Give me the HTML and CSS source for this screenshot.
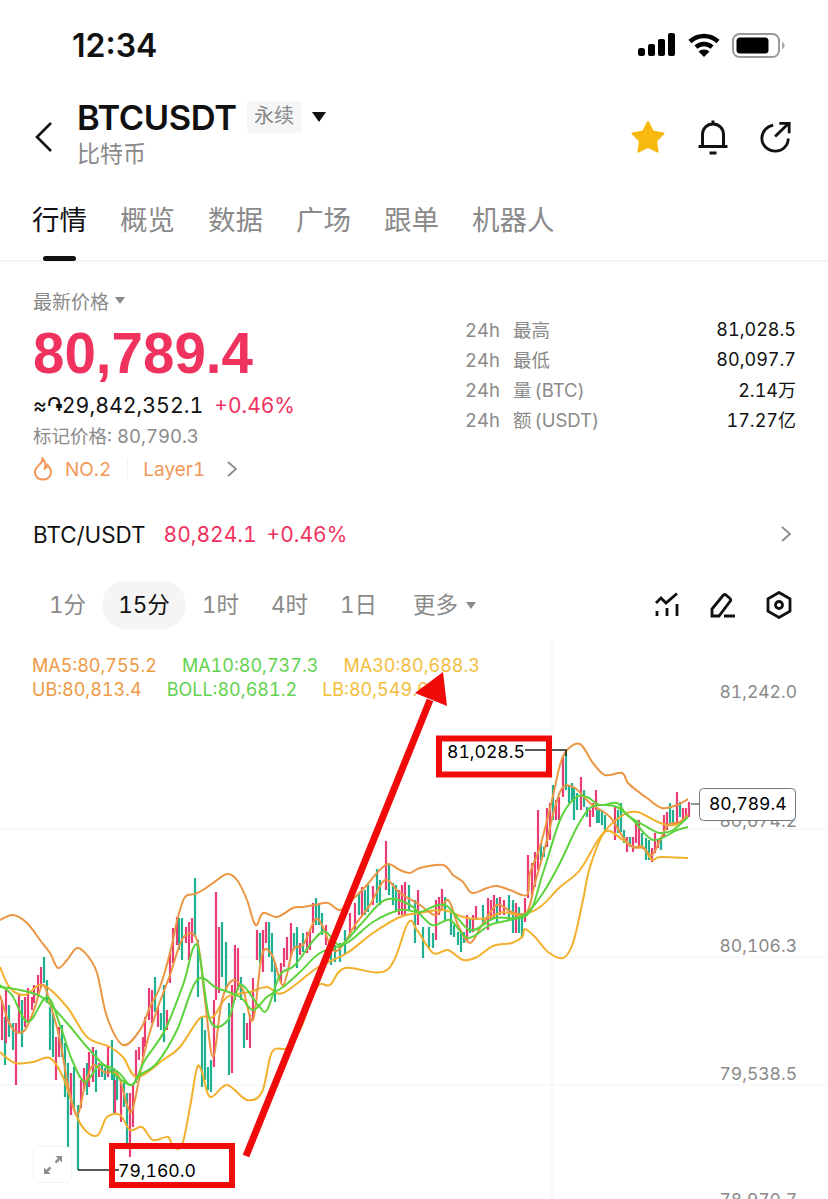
FILE: index.html
```html
<!DOCTYPE html>
<html lang="zh-CN">
<head>
    <meta charset="UTF-8">
    <meta name="viewport" content="width=device-width, initial-scale=1.0">
    <title>BTCUSDT 永续</title>
    <link rel="stylesheet" href="styles.css">
</head>
<body>
    <div class="screen">
        <div class="status-bar">
            <span class="clock">12:34</span>
            <div class="status-icons">
                <svg width="38" height="24" viewBox="0 0 38 24">
                    <rect x="0" y="15" width="7" height="8" rx="2.5"/>
                    <rect x="10" y="11" width="7" height="12" rx="2"/>
                    <rect x="20" y="6" width="7" height="17" rx="2"/>
                    <rect x="30" y="0" width="7" height="23" rx="2"/>
                </svg>
                <svg width="32" height="25" viewBox="0 0 32 25">
                    <path d="M2 8.5C10 1 22 1 30 8.5" class="wifi-arc"/>
                    <path d="M8 14.2C12.5 10 19.5 10 24 14.2" class="wifi-arc"/>
                    <path d="M16 24L10.5 18.6C13.5 15.8 18.5 15.8 21.5 18.6Z"/>
                </svg>
                <svg width="53" height="25" viewBox="0 0 53 25">
                    <rect x="1" y="1" width="46" height="23" rx="6.5" class="battery-shell"/>
                    <rect x="4.5" y="4.5" width="32" height="16" rx="3.5"/>
                    <path d="M50 9C52 9.6 52.6 11 52.6 12.5S52 15.4 50 16Z" class="battery-cap"/>
                </svg>
            </div>
        </div>

        <header class="pair-head">
            <svg class="back" width="20" height="32" viewBox="0 0 20 32">
                <path d="M17 2L3 16L17 30"/>
            </svg>
            <div class="pair-name">
                <div class="pair-title">
                    <h1>BTCUSDT</h1>
                    <span class="pair-type">永续</span>
                    <i class="caret-big"></i>
                </div>
                <div class="pair-sub">比特币</div>
            </div>
            <div class="pair-actions">
                <svg width="36" height="34" viewBox="0 0 36 34">
                    <path d="M18 2L23 11.6L33.6 13.4L26 21L27.6 31.6L18 26.8L8.4 31.6L10 21L2.4 13.4L13 11.6Z" class="star"/>
                </svg>
                <svg width="32" height="36" viewBox="0 0 32 36">
                    <path d="M16 1.500V5M5.500 27V15.500C5.500 9.500 10 5 16 5S26.500 9.500 26.500 15.500V27M1.500 27.500H30.500M12.500 34H19.500" class="line-icon"/>
                </svg>
                <svg width="32" height="32" viewBox="0 0 34 34">
                    <path d="M14 4.500C7 5.800 2 11.500 2 18.300C2 26 8.500 32 16.300 32C24 32 30 26 30 18.500M16 16.500L30 3M20.500 2.500H31V13" class="line-icon"/>
                </svg>
            </div>
        </header>

        <nav class="tabs">
            <a class="tab active">行情</a>
            <a class="tab">概览</a>
            <a class="tab">数据</a>
            <a class="tab">广场</a>
            <a class="tab">跟单</a>
            <a class="tab">机器人</a>
        </nav>

        <section class="quote">
            <div class="quote-main">
                <div class="quote-label">最新价格 <i class="caret-small"></i></div>
                <div class="last-price">80,789.4</div>
                <div class="fiat-row">
                    <span class="fiat">≈֏29,842,352.1</span>
                    <span class="up">+0.46%</span>
                </div>
                <div class="mark-price">标记价格: 80,790.3</div>
                <div class="rank-row">
                    <svg width="20" height="24" viewBox="0 0 20 24">
                        <path d="M9.500 1.500C10 6 5.500 7.500 3 11.500C0.500 16 3 22.500 10 22.500C17 22.500 19 16.500 17.500 12.500C16.500 10 15.500 9.500 14.500 8C14 10.500 13 11 11.800 11.500C12.800 8 12 4 9.500 1.500Z"/>
                    </svg>
                    <span class="rank">NO.2</span>
                    <span class="rank-sep"></span>
                    <span class="rank">Layer1</span>
                    <svg class="chev" width="12" height="18" viewBox="0 0 12 18">
                        <path d="M2 2L10 9L2 16"/>
                    </svg>
                </div>
            </div>
            <div class="stats">
                <div class="stat"><span class="stat-key">24h<b>最高</b></span><span class="stat-val">81,028.5</span></div>
                <div class="stat"><span class="stat-key">24h<b>最低</b></span><span class="stat-val">80,097.7</span></div>
                <div class="stat"><span class="stat-key">24h<b>量 (BTC)</b></span><span class="stat-val">2.14万</span></div>
                <div class="stat"><span class="stat-key">24h<b>额 (USDT)</b></span><span class="stat-val">17.27亿</span></div>
            </div>
        </section>

        <div class="spot-row">
            <span class="spot-name">BTC/USDT</span>
            <span class="spot-price">80,824.1</span>
            <span class="spot-price">+0.46%</span>
            <svg class="chev" width="12" height="18" viewBox="0 0 12 18">
                <path d="M2 2L10 9L2 16"/>
            </svg>
        </div>

        <div class="period-bar">
            <a class="period">1分</a>
            <a class="period active">15分</a>
            <a class="period">1时</a>
            <a class="period">4时</a>
            <a class="period">1日</a>
            <a class="period more">更多 <i class="caret-small"></i></a>
            <div class="period-tools">
                <svg width="26" height="26" viewBox="0 0 26 26">
                    <path d="M2 11L7 6L12 11L23 1.500M3 19V24M13 16V24M23 12V24" class="line-icon thin"/>
                </svg>
                <svg width="26" height="26" viewBox="0 0 26 26">
                    <path d="M2 24V17L13 3.500C14 2.300 15 2.300 16 3L20 6.500C21 7.500 21 8.500 20 9.500L9 24ZM14 24H25" class="line-icon thin"/>
                </svg>
                <svg width="26" height="28" viewBox="0 0 26 28">
                    <path d="M13 1.500L24 7.800V20.200L13 26.500L2 20.200V7.800Z" class="line-icon thin"/>
                    <circle cx="13" cy="14" r="3.500" class="line-icon thin"/>
                </svg>
            </div>
        </div>

        <div class="chart">
            <div class="legend">
                <div class="legend-row">
                    <span class="c-orange">MA5:80,755.2</span>
                    <span class="c-green">MA10:80,737.3</span>
                    <span class="c-yellow">MA30:80,688.3</span>
                </div>
                <div class="legend-row">
                    <span class="c-orange">UB:80,813.4</span>
                    <span class="c-green">BOLL:80,681.2</span>
                    <span class="c-yellow">LB:80,549.6</span>
                </div>
            </div>

            <!-- viewBox starts at 640 so y values read as page rows -->
            <svg class="plot" width="828" height="559" viewBox="0 640 828 559">
                <path class="grid" d="M0 829H828M0 957H828M0 1085H828M552 640V1199"/>

                <text class="axis" x="797" y="698">81,242.0</text>
                <text class="axis" x="797" y="827">80,674.2</text>
                <text class="axis" x="797" y="952">80,106.3</text>
                <text class="axis" x="797" y="1080">79,538.5</text>
                <text class="axis" x="797" y="1206">78,970.7</text>

                <path class="candle-down" d="M5 1017V1065M9 1005V1037M13 1023V1050M22 1000V1047M44 957V983M47 980V1003M50 1007V1050M53 1013V1057M62 1025V1057M65 1043V1097M68 1063V1148M74 1067V1110M78 1105V1170M87 1063V1095M96 1050V1092M102 1063V1077M105 1068V1080M112 1040V1080M114 1068V1113M117 1073V1100M124 1083V1107M127 1093V1143M155 977V1012M161 1013V1030M164 985V1042M179 918V950M182 918V960M195 878V937M198 940V997M202 1017V1087M205 1030V1080M208 1067V1090M211 1060V1092M222 922V977M226 942V990M229 1003V1075M241 977V1000M244 1013V1048M260 933V963M269 922V957M272 933V972M275 962V1002M294 933V950M297 927V968M303 933V952M316 898V925M319 905V925M322 913V935M331 950V965M335 945V962M340 943V962M345 930V955M359 892V915M365 890V915M368 883V912M377 869V903M380 880V905M389 865V895M393 883V905M396 885V910M409 885V910M415 900V943M423 927V958M429 927V948M433 933V948M445 897V920M451 913V935M454 925V937M458 932V945M461 933V952M464 932V943M470 918V933M483 905V925M497 898V922M509 895V920M513 900V933M519 907V933M522 913V938M541 843V860M544 847V857M553 785V820M566 752V790M569 785V803M572 783V800M574 787V820M577 793V810M584 790V807M587 807V817M597 810V823M599 810V823M602 810V825M605 815V830M618 810V833M621 803V832M624 830V843M630 837V847M642 833V848M646 838V860M649 840V860M661 837V850M670 803V823M673 810V825M680 802V817"/>
                <path class="candle-up" d="M2 1000V1040M6 990V1043M16 1023V1085M19 993V1032M25 997V1027M28 988V1022M32 997V1010M34 985V1003M38 975V997M41 967V988M56 1037V1080M59 1027V1057M71 1073V1115M81 1080V1108M84 1068V1090M89 1052V1087M93 1047V1082M99 1063V1077M108 1047V1077M115 1080V1113M121 1080V1122M130 1093V1157M133 1083V1127M136 1050V1083M139 1047V1060M143 1037V1057M145 1017V1047M149 988V1020M152 990V1023M158 1007V1027M167 1010V1030M170 952V983M173 928V963M177 917V945M186 927V943M189 922V960M192 918V943M214 1000V1067M216 892V1000M219 927V993M232 985V1073M235 945V1000M238 948V990M247 1023V1040M250 1015V1048M253 978V1020M257 930V960M263 930V972M266 922V943M281 963V983M284 948V967M287 937V960M291 923V957M300 943V955M307 932V953M310 930V950M313 903V933M326 925V945M350 913V937M355 903V930M362 887V915M373 886V905M386 841V890M399 890V915M402 885V915M405 882V915M418 890V925M436 900V940M439 897V915M442 889V910M467 915V942M473 915V932M476 906V920M488 898V930M491 900V920M494 895V918M500 897V915M504 900V915M516 903V933M525 898V922M528 855V898M532 863V897M535 852V887M538 810V870M547 808V847M550 803V840M556 800V820M559 797V820M563 757V797M581 777V810M590 810V827M593 803V817M596 790V810M615 807V840M627 837V852M633 837V852M636 820V843M639 820V848M652 848V862M655 833V853M658 840V848M664 815V837M667 812V830M677 792V825M683 808V822M686 808V817M689 802V817"/>

                <!-- upper band -->
                <path class="line-ub" data-points="0,920 13,915 27,923 40,940 50,953 58,968 67,960 77,948 87,955 97,973 107,1017 123,1045 140,1030 150,1007 160,987 170,953 178,917 185,897 195,894 203,890 213,883 227,874 237,880 247,900 253,920 257,925 263,913 277,917 293,908 303,907 315,905 328,903 340,910 352,900 366,886 377,873 388,864 400,870 410,873 420,868 443,865 453,875 463,882 472,893 487,888 497,886 510,890 527,895 530,873 540,847 552,800 560,765 567,750 580,744 593,763 605,775 622,773 628,783 640,793 647,798 662,808 677,805 688,799"/>
                <!-- lower band -->
                <path class="line-lb" data-points="0,1052 15,1063 33,1062 50,1058 63,1077 77,1117 87,1132 98,1135 107,1117 120,1115 130,1130 142,1127 153,1140 168,1137 173,1147 182,1145 190,1107 197,1068 202,1072 210,1097 227,1085 247,1100 262,1092 272,1052 287,1048 300,1030 317,987 330,985 345,968 387,970 408,923 417,930 433,953 448,950 463,960 477,957 493,946 512,943 522,937 525,929 535,937 548,952 563,958 573,943 583,900 590,867 605,832 623,840 633,847 643,847 652,860 660,857 688,858"/>
                <!-- ma30 -->
                <path class="line-lb" data-points="0,967 10,988 25,995 43,985 67,1007 87,1037 110,1047 123,1057 137,1077 163,1060 180,1047 200,1018 213,1017 227,997 250,992 267,987 283,993 317,968 347,953 373,933 400,917 420,913 443,910 467,918 487,918 503,912 520,915 540,907 560,887 580,870 600,837 620,817 637,812 660,823 675,825 688,815"/>
                <!-- ma5 -->
                <path class="line-ub" data-points="0,995 8,1020 16,1032 25,1030 34,1010 43,985 52,1010 60,1040 68,1085 77,1115 85,1085 93,1065 104,1072 118,1075 127,1105 133,1108 145,1050 157,1010 170,975 183,938 197,940 205,1000 213,1057 222,1000 233,980 243,990 253,1020 262,955 272,955 283,985 293,950 303,945 315,920 322,925 333,950 343,945 355,925 370,905 385,880 400,893 420,905 436,915 448,900 458,925 470,943 482,925 497,905 512,912 527,912 535,883 547,840 555,807 563,787 575,788 590,803 610,817 623,837 633,847 643,848 652,855 660,840 668,825 680,822 688,815"/>
                <!-- ma10 -->
                <path class="line-ma" data-points="0,987 20,990 43,998 67,1023 87,1047 107,1068 130,1085 140,1075 157,1063 177,1030 197,980 217,988 240,997 253,1010 267,997 283,987 300,972 320,953 347,943 373,922 400,910 420,912 445,905 470,930 495,918 527,915 543,873 560,820 575,798 587,797 600,805 617,803 627,815 647,827 660,833 673,830 688,817"/>
                <!-- boll -->
                <path class="line-ma" data-points="0,985 12,995 28,1022 47,997 60,1025 72,1060 85,1082 100,1065 118,1072 132,1085 145,1060 165,1030 183,985 197,945 210,1020 228,1020 240,985 258,1005 267,1010 280,975 295,965 322,932 340,945 360,925 385,900 410,905 432,925 450,920 468,938 490,925 510,920 527,913 543,893 560,863 577,827 590,808 603,805 617,807 633,820 653,840 677,830 688,827"/>

                <path class="marker-line" d="M525 750H566V756M78 1170H119"/>
                <text class="marker" x="447" y="758">81,028.5</text>
                <text class="marker" x="118" y="1177">79,160.0</text>

                <rect class="red-box" x="439" y="738.500" width="110" height="36"/>
                <rect class="red-box" x="112" y="1146" width="120" height="39"/>
                <path class="red-arrow-shaft" d="M246 1156L430 700"/>
                <polygon class="red-arrow-head" points="443,672 447,706 415,693"/>

                <path class="tag-tick" d="M691 804H699"/>
                <rect class="price-tag" x="699.500" y="788.500" width="96" height="32" rx="4"/>
                <text class="tag-text" x="709" y="810">80,789.4</text>
            </svg>

            <button class="expand">
                <svg width="20" height="20" viewBox="0 0 20 20">
                    <path d="M1 19V12.500L7.500 19ZM19 1V7.500L12.500 1Z"/>
                    <path d="M4 16L16 4" class="expand-bar"/>
                </svg>
            </button>
        </div>
    </div>
    <script src="chart.js"></script>
</body>
</html>
```

FILE: styles.css
```css
* {
    box-sizing: border-box;
}
html, body {
    margin: 0;
    background-color: #fff;
}
body {
    font-family: Inter, "Noto Sans CJK SC", sans-serif;
    font-variant-numeric: tabular-nums;
    color: #111;
}
.screen {
    width: 828px;
    height: 1199px;
    overflow: hidden;
}

/* status bar */
.status-bar {
    height: 90px;
    display: flex;
    align-items: center;
    justify-content: space-between;
    padding: 0 43px 0 72px;
}
.clock {
    font-size: 32px;
    font-weight: 600;
    font-variant-numeric: normal;
}
.status-icons {
    display: flex;
    align-items: center;
    gap: 12px;
}
.status-icons svg {
    fill: #000;
}
.status-icons .wifi-arc {
    fill: none;
    stroke: #000;
    stroke-width: 4.5;
}
.status-icons .battery-shell {
    fill: none;
    stroke: #999;
    stroke-width: 2;
}
.status-icons .battery-cap {
    fill: #aaa;
}

/* pair header */
.pair-head {
    height: 94px;
    display: flex;
    align-items: center;
    padding: 0 36px 0 34px;
}
.back {
    margin-right: 23px;
}
.back path {
    fill: none;
    stroke: #111;
    stroke-width: 2.6;
}
.pair-name {
    flex: 1;
    margin-top: -10px;
}
.pair-title {
    display: flex;
    align-items: center;
    height: 44px;
}
.pair-title h1 {
    margin: 0;
    font-size: 34.500px;
    font-weight: 600;
    letter-spacing: -0.4px;
}
.pair-type {
    margin-left: 10px;
    width: 55px;
    height: 32px;
    line-height: 30px;
    text-align: center;
    font-size: 20px;
    color: #888;
    background-color: #f6f6f6;
    border-radius: 3px;
}
.caret-big {
    margin-left: 10px;
    border-left: 7px solid transparent;
    border-right: 7px solid transparent;
    border-top: 10px solid #111;
}
.pair-sub {
    font-size: 23px;
    line-height: 30px;
    color: #8a8a8a;
}
.pair-actions {
    display: flex;
    align-items: center;
    gap: 31px;
}
.star {
    fill: #f8b90f;
    stroke: #f8b90f;
    stroke-width: 2;
    stroke-linejoin: round;
}
.line-icon {
    fill: none;
    stroke: #111;
    stroke-width: 3;
}
.line-icon.thin {
    stroke-width: 2.8;
}

/* main tabs */
.tabs {
    height: 78px;
    display: flex;
    gap: 33px;
    padding: 14px 32px 0;
    border-bottom: 2px solid #f4f4f4;
}
.tab {
    position: relative;
    font-size: 27.500px;
    line-height: 44px;
    color: #8a8a8a;
}
.tab.active {
    color: #111;
}
.tab.active::after {
    content: "";
    position: absolute;
    left: 11px;
    right: 11px;
    top: 58px;
    height: 5px;
    border-radius: 3px;
    background-color: #111;
}

/* price block */
.quote {
    height: 250px;
    display: flex;
    justify-content: space-between;
    padding: 23px 32px 0 33px;
}
.quote-label {
    display: flex;
    align-items: center;
    gap: 6px;
    height: 30px;
    font-size: 19px;
    color: #8a8a8a;
}
.caret-small {
    display: inline-block;
    border-left: 5px solid transparent;
    border-right: 5px solid transparent;
    border-top: 7px solid #8a8a8a;
}
.last-price {
    font-family: "Liberation Sans", sans-serif;
    font-size: 56.500px;
    font-weight: 700;
    line-height: 70px;
    color: #f0325f;
    margin-top: 4px;
}
.fiat-row {
    display: flex;
    gap: 11px;
    align-items: center;
    height: 36px;
    font-size: 21.300px;
    margin-top: -2px;
}
.fiat {
    color: #111;
}
.up {
    font-size: 21px;
    color: #f0325f;
}
.mark-price {
    font-size: 18.500px;
    line-height: 28px;
    color: #8a8a8a;
    margin-top: -1px;
}
.rank-row {
    display: flex;
    align-items: center;
    height: 36px;
    margin-top: 1px;
    color: #f2985a;
    font-size: 19px;
}
.rank-row svg path {
    fill: none;
    stroke: #f2985a;
    stroke-width: 2;
}
.rank {
    margin-left: 12px;
}
.rank-sep {
    width: 1px;
    height: 20px;
    margin-left: 16px;
    margin-right: 3px;
    background-color: #f2f2f2;
}
.chev {
    margin-left: 21px;
}
.rank-row .chev path, .chev path {
    fill: none;
    stroke: #8a8a8a;
    stroke-width: 1.800;
}
.stats {
    width: 331px;
    padding-top: 29px;
}
.stat {
    display: flex;
    justify-content: space-between;
    align-items: center;
    height: 30px;
    font-size: 18px;
}
.stat-key {
    color: #8a8a8a;
    font-size: 18.500px;
}
.stat-key b {
    font-weight: 400;
    margin-left: 13px;
    word-spacing: -2px;
}
.stat-val {
    color: #111;
}

/* spot row */
.spot-row {
    height: 44px;
    display: flex;
    align-items: center;
    gap: 10px;
    padding: 0 36px 0 33px;
    font-size: 21px;
}
.spot-name {
    font-size: 22.400px;
    margin-right: 8px;
}
.spot-price {
    color: #f0325f;
}
.spot-row .chev {
    margin-left: auto;
}

/* period switch */
.period-bar {
    height: 84px;
    display: flex;
    align-items: center;
    padding: 14px 36px 0 33px;
    font-size: 22.500px;
    color: #8a8a8a;
}
.period {
    width: 69px;
    height: 48px;
    line-height: 48px;
    text-align: center;
}
.period.active {
    width: 84px;
    color: #111;
    background-color: #f5f5f5;
    border-radius: 24px;
}
.period.more {
    width: auto;
    display: flex;
    align-items: center;
    gap: 8px;
    margin-left: 20px;
}
.period-tools {
    margin-left: auto;
    display: flex;
    align-items: center;
    gap: 30px;
}

/* chart */
.chart {
    position: relative;
    height: 559px;
}
.legend {
    padding: 14px 0 0 32px;
    font-size: 18px;
    line-height: 24px;
}
.legend-row {
    display: flex;
    gap: 25px;
}
.c-orange {
    color: #ee9a45;
}
.c-green {
    color: #62d24f;
}
.c-yellow {
    color: #f3bd3c;
}
.plot {
    position: absolute;
    left: 0;
    top: 0;
}
.grid {
    fill: none;
    stroke: #f6f6f6;
    stroke-width: 1.500;
}
.axis {
    font-size: 17.500px;
    fill: #8a8a8a;
    text-anchor: end;
}
.candle-down, .candle-up {
    fill: none;
    stroke-width: 2.200;
}
.candle-down {
    stroke: #1fb191;
}
.candle-up {
    stroke: #e93c72;
}
.line-ub, .line-lb, .line-ma {
    fill: none;
    stroke-width: 2;
    stroke-linejoin: round;
}
.line-ub {
    stroke: #ea9642;
}
.line-lb {
    stroke: #f2b02d;
}
.line-ma {
    stroke: #5cd23c;
}
.marker-line {
    fill: none;
    stroke: #222;
    stroke-width: 1.400;
}
.marker {
    font-size: 17.600px;
    fill: #000;
}
.red-box {
    fill: none;
    stroke: #f00a0a;
    stroke-width: 6;
}
.red-arrow-shaft {
    fill: none;
    stroke: #f00a0a;
    stroke-width: 7;
}
.red-arrow-head {
    fill: #f00a0a;
}
.tag-tick {
    stroke: #666;
    stroke-width: 1.400;
}
.price-tag {
    fill: #fff;
    stroke: #777;
    stroke-width: 1;
}
.tag-text {
    font-size: 17.500px;
    fill: #000;
}
.expand {
    position: absolute;
    left: 33px;
    top: 506px;
    width: 39px;
    height: 37px;
    padding: 0;
    display: flex;
    align-items: center;
    justify-content: center;
    background-color: #fff;
    border: 1px solid #f2f2f2;
    border-radius: 7px;
}
.expand svg {
    fill: #8e8e8e;
}
.expand-bar {
    stroke: #8e8e8e;
    stroke-width: 2.500;
    stroke-dasharray: 5 7;
}
```

FILE: chart.js
```js
// turn each indicator's point list into a smooth curve
document.querySelectorAll('path[data-points]').forEach(line => {
    const pts = line.dataset.points.split(' ').map(p => p.split(',').map(Number));
    let d = `M${pts[0][0]} ${pts[0][1]}`;
    for (let i = 0; i < pts.length - 1; i++) {
        const p0 = pts[i - 1] || pts[i];
        const p1 = pts[i];
        const p2 = pts[i + 1];
        const p3 = pts[i + 2] || p2;
        const c1x = p1[0] + (p2[0] - p0[0]) / 6;
        const c1y = p1[1] + (p2[1] - p0[1]) / 6;
        const c2x = p2[0] - (p3[0] - p1[0]) / 6;
        const c2y = p2[1] - (p3[1] - p1[1]) / 6;
        d += `C${c1x} ${c1y} ${c2x} ${c2y} ${p2[0]} ${p2[1]}`;
    }
    line.setAttribute('d', d);
});
```
